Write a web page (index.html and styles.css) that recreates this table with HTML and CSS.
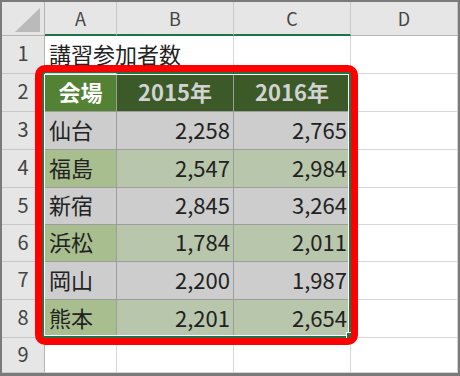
FILE: index.html
```html
<!DOCTYPE html>
<html lang="ja">
<head>
<meta charset="utf-8">
<title>講習参加者数</title>
<link rel="stylesheet" href="styles.css">
</head>
<body>
<div class="frame">
  <div class="sheet">
    <div class="c h corner"><svg width="42" height="33" viewBox="0 0 42 33"><polygon points="13,30 38,30 38,6" fill="#bababa"/></svg></div>
    <div class="c h colh sel">A</div>
    <div class="c h colh sel">B</div>
    <div class="c h colh sel">C</div>
    <div class="c h colh">D</div>

    <div class="c h rowh">1</div>
    <div class="c spill">講習参加者数</div>
    <div class="c"></div>
    <div class="c"></div>
    <div class="c"></div>

    <div class="c h rowh">2</div>
    <div class="c t th active">会場</div>
    <div class="c t th">2015年</div>
    <div class="c t th">2016年</div>
    <div class="c"></div>

    <div class="c h rowh">3</div>
    <div class="c t odd">仙台</div>
    <div class="c t odd num">2,258</div>
    <div class="c t odd num">2,765</div>
    <div class="c"></div>

    <div class="c h rowh">4</div>
    <div class="c t even first">福島</div>
    <div class="c t even num">2,547</div>
    <div class="c t even num">2,984</div>
    <div class="c"></div>

    <div class="c h rowh">5</div>
    <div class="c t odd">新宿</div>
    <div class="c t odd num">2,845</div>
    <div class="c t odd num">3,264</div>
    <div class="c"></div>

    <div class="c h rowh">6</div>
    <div class="c t even first">浜松</div>
    <div class="c t even num">1,784</div>
    <div class="c t even num">2,011</div>
    <div class="c"></div>

    <div class="c h rowh">7</div>
    <div class="c t odd">岡山</div>
    <div class="c t odd num">2,200</div>
    <div class="c t odd num">1,987</div>
    <div class="c"></div>

    <div class="c h rowh">8</div>
    <div class="c t even first">熊本</div>
    <div class="c t even num">2,201</div>
    <div class="c t even num">2,654</div>
    <div class="c"></div>

    <div class="c h rowh">9</div>
    <div class="c"></div>
    <div class="c"></div>
    <div class="c"></div>
    <div class="c"></div>
  </div>
  <div class="selection"></div>
  <div class="handle"></div>
  <div class="highlight"></div>
</div>
</body>
</html>
```
FILE: styles.css
```css
* {
  box-sizing: border-box;
  margin: 0;
  padding: 0;
}

body {
  margin: 0;
  background: #ffffff;
  font-family: "Noto Sans CJK JP", "Noto Sans", sans-serif;
}

.frame {
  position: relative;
  width: 460px;
  height: 376px;
  border-style: solid;
  border-color: #7a7a7a;
  border-width: 2px 2px 3px 2px;
  overflow: hidden;
  background: #ffffff;
}

.sheet {
  display: grid;
  grid-template-columns: 43px 72px 117px 117px 107px;
  grid-template-rows: 34px 38px 38px 38px 38px 37px 37px 38px 38px 35px;
}

.c {
  display: flex;
  align-items: center;
  padding: 0 4px 4px 4px;
  border-right: 1px solid #d6d6d6;
  border-bottom: 1px solid #d6d6d6;
  font-size: 22px;
  color: #222222;
  white-space: nowrap;
  overflow: hidden;
}

.h {
  background: #e6e6e6;
  border-color: #c8c8c8;
  color: #444444;
  justify-content: center;
  padding: 0;
}

.corner {
  padding: 0;
  align-items: stretch;
  justify-content: stretch;
  border-right-color: #b4b4b4;
  border-bottom-color: #b4b4b4;
}

.colh {
  font-size: 18px;
  padding-bottom: 1px;
  border-bottom-color: #b4b4b4;
}

.colh.sel {
  border-bottom: 2px solid #217346;
}

.rowh {
  font-size: 20px;
  padding-bottom: 4px;
  border-right-color: #b4b4b4;
}

.spill {
  overflow: visible;
  border-right-color: transparent;
  position: relative;
  z-index: 1;
}

.t {
  border-color: #9d9d9d;
}

.th {
  justify-content: center;
  font-weight: bold;
  background: #3b5a27;
  color: #d2d2d2;
  padding-bottom: 3px;
}

.th.active {
  background: #548235;
  color: #ffffff;
}

.odd {
  background: #cdcdcd;
}

.even {
  background: #b8c6ab;
}

.even.first {
  background: #a8be8f;
}

.num {
  justify-content: flex-end;
  padding-right: 3px;
}

.selection {
  position: absolute;
  left: 40px;
  top: 70px;
  width: 309px;
  height: 266px;
  border: 2px solid #217346;
  box-shadow: inset 0 0 0 1px #ffffff;
}

.handle {
  position: absolute;
  left: 344px;
  top: 330px;
  width: 7px;
  height: 7px;
  background: #217346;
  border: 1px solid #ffffff;
}

.highlight {
  position: absolute;
  left: 33px;
  top: 63px;
  width: 323px;
  height: 280px;
  border: 7px solid #ff0000;
  border-radius: 10px;
}
```
